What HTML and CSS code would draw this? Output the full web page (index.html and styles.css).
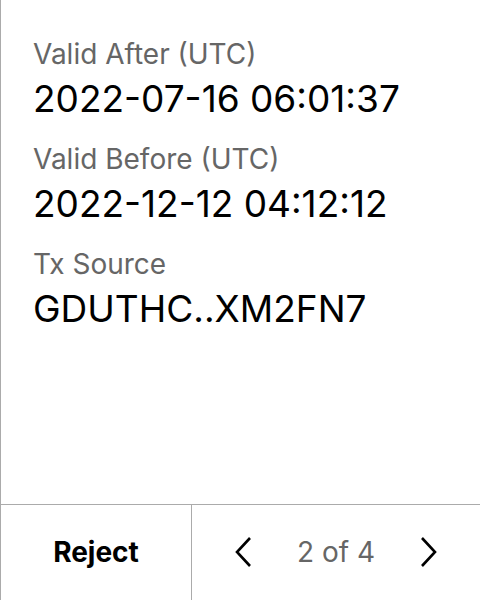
FILE: index.html
```html
<!DOCTYPE html>
<html>
<head>
<meta charset="utf-8">
<link rel="stylesheet" href="styles.css">
</head>
<body>
<div class="panel">
  <div class="content">
    <div class="field">
      <div class="label">Valid After (UTC)</div>
      <div class="value">2022-07-16 06:01:37</div>
    </div>
    <div class="field">
      <div class="label">Valid Before (UTC)</div>
      <div class="value">2022-12-12 04:12:12</div>
    </div>
    <div class="field">
      <div class="label">Tx Source</div>
      <div class="value">GDUTHC..XM2FN7</div>
    </div>
  </div>
  <div class="footer">
    <div class="reject">Reject</div>
    <div class="pager">
      <svg class="chev" width="18" height="32" viewBox="0 0 18 32"><path d="M16 2 L3 16 L16 30" fill="none" stroke="#000" stroke-width="2.6"/></svg>
      <span class="count">2 of 4</span>
      <svg class="chev" width="18" height="32" viewBox="0 0 18 32"><path d="M2 2 L15 16 L2 30" fill="none" stroke="#000" stroke-width="2.6"/></svg>
    </div>
  </div>
</div>
</body>
</html>
```

FILE: styles.css
```css
* { box-sizing: border-box; }
html, body { margin: 0; padding: 0; background: #fff; }
body { font-family: Inter, "Noto Sans", sans-serif; }
.panel {
  width: 480px;
  height: 600px;
  border-left: 1px solid #ababab;
  display: flex;
  flex-direction: column;
}
.content {
  flex: 1;
  padding: 37px 0 0 32px;
  display: flex;
  flex-direction: column;
  gap: 21px;
}
.field { display: flex; flex-direction: column; gap: 6px; }
.label { font-size: 28px; line-height: 34px; color: #666; }
.value { font-size: 37px; line-height: 44px; color: #000; }
.footer {
  height: 96px;
  border-top: 1px solid #ababab;
  display: flex;
}
.reject {
  width: 191px;
  border-right: 1px solid #ababab;
  display: flex;
  align-items: center;
  justify-content: center;
  font-size: 28px;
  font-weight: 700;
  color: #000;
  padding-bottom: 2px;
}
.pager {
  flex: 1;
  display: flex;
  align-items: center;
  justify-content: space-between;
  padding: 0 42px 2px;
}
.count { font-size: 28px; color: #666; }
```
